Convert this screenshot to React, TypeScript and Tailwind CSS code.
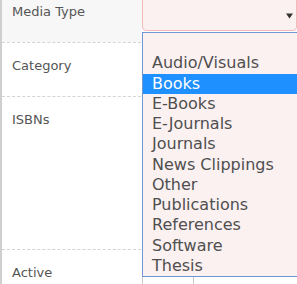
import React from "react";

const options = [
  "",
  "Audio/Visuals",
  "Books",
  "E-Books",
  "E-Journals",
  "Journals",
  "News Clippings",
  "Other",
  "Publications",
  "References",
  "Software",
  "Thesis",
];

function Row({
  label,
  h,
  bg,
  border = true,
  children,
}: {
  label: string;
  h: string;
  bg?: string;
  border?: boolean;
  children?: React.ReactNode;
}) {
  return (
    <div
      className={`flex ${h} ${border ? "border-b border-dashed border-[#d4d4d4]" : ""}`}
    >
      <div
        className={`w-[140px] shrink-0 pl-[10px] pt-[15px] text-[13px] leading-[16px] text-[#555555] ${bg ?? "bg-white"}`}
      >
        {label}
      </div>
      <div className="flex-1 bg-white">{children}</div>
    </div>
  );
}

export default function App() {
  return (
    <div
      className="relative h-[284px] w-[297px] overflow-hidden bg-white"
      style={{ fontFamily: '"DejaVu Sans", Verdana, sans-serif' }}
    >
      <div className="flex flex-col border-l-2 border-[#cfcfcf] -mt-[11px]">
        <div className="flex h-[54px] border-b border-dashed border-[#d4d4d4]">
          <div className="w-[140px] shrink-0 bg-[#f7f7f7] pl-[10px] pt-[15px] text-[13px] leading-[16px] text-[#555555]">
            Media Type
          </div>
          <div className="flex-1 bg-white">
            <div className="relative h-[42px] w-[155px] rounded-[4px] border border-[#f3baba] bg-[#fcf1f1]">
              <svg
                className="absolute left-[143px] top-[23px]"
                width="7"
                height="6"
                viewBox="0 0 7 6"
              >
                <path d="M0 0.5 H7 L3.5 5.5 Z" fill="#333333" />
              </svg>
            </div>
          </div>
        </div>
        <Row label="Category" h="h-[54px]" />
        <Row label="ISBNs" h="h-[153px]" />
        <div className="flex h-[40px]">
          <div className="w-[140px] shrink-0 bg-white pl-[10px] pt-[15px] text-[13px] leading-[16px] text-[#555555]">
            Active
          </div>
          <div className="flex-1 bg-white pt-[10px]">
            <div className="relative h-[40px] w-[52px] border-x border-[#c8c8c8] bg-white">
              <div className="absolute left-[41px] top-[13px] h-[2px] w-[2px] bg-[#444444]" />
            </div>
          </div>
        </div>
      </div>

      <div className="absolute left-[142px] top-[32px] w-[170px] border border-[#7096d6] bg-[#fcf1f1] pt-0">
        {options.map((o, i) => (
          <div
            key={i}
            className={`h-[20.25px] pl-[9px] text-[16px] leading-[20.25px] whitespace-nowrap ${
              o === "Books" ? "bg-[#1e90ff] text-white" : "text-[#4f4f4f]"
            }`}
          >
            {o}
          </div>
        ))}
      </div>
    </div>
  );
}
